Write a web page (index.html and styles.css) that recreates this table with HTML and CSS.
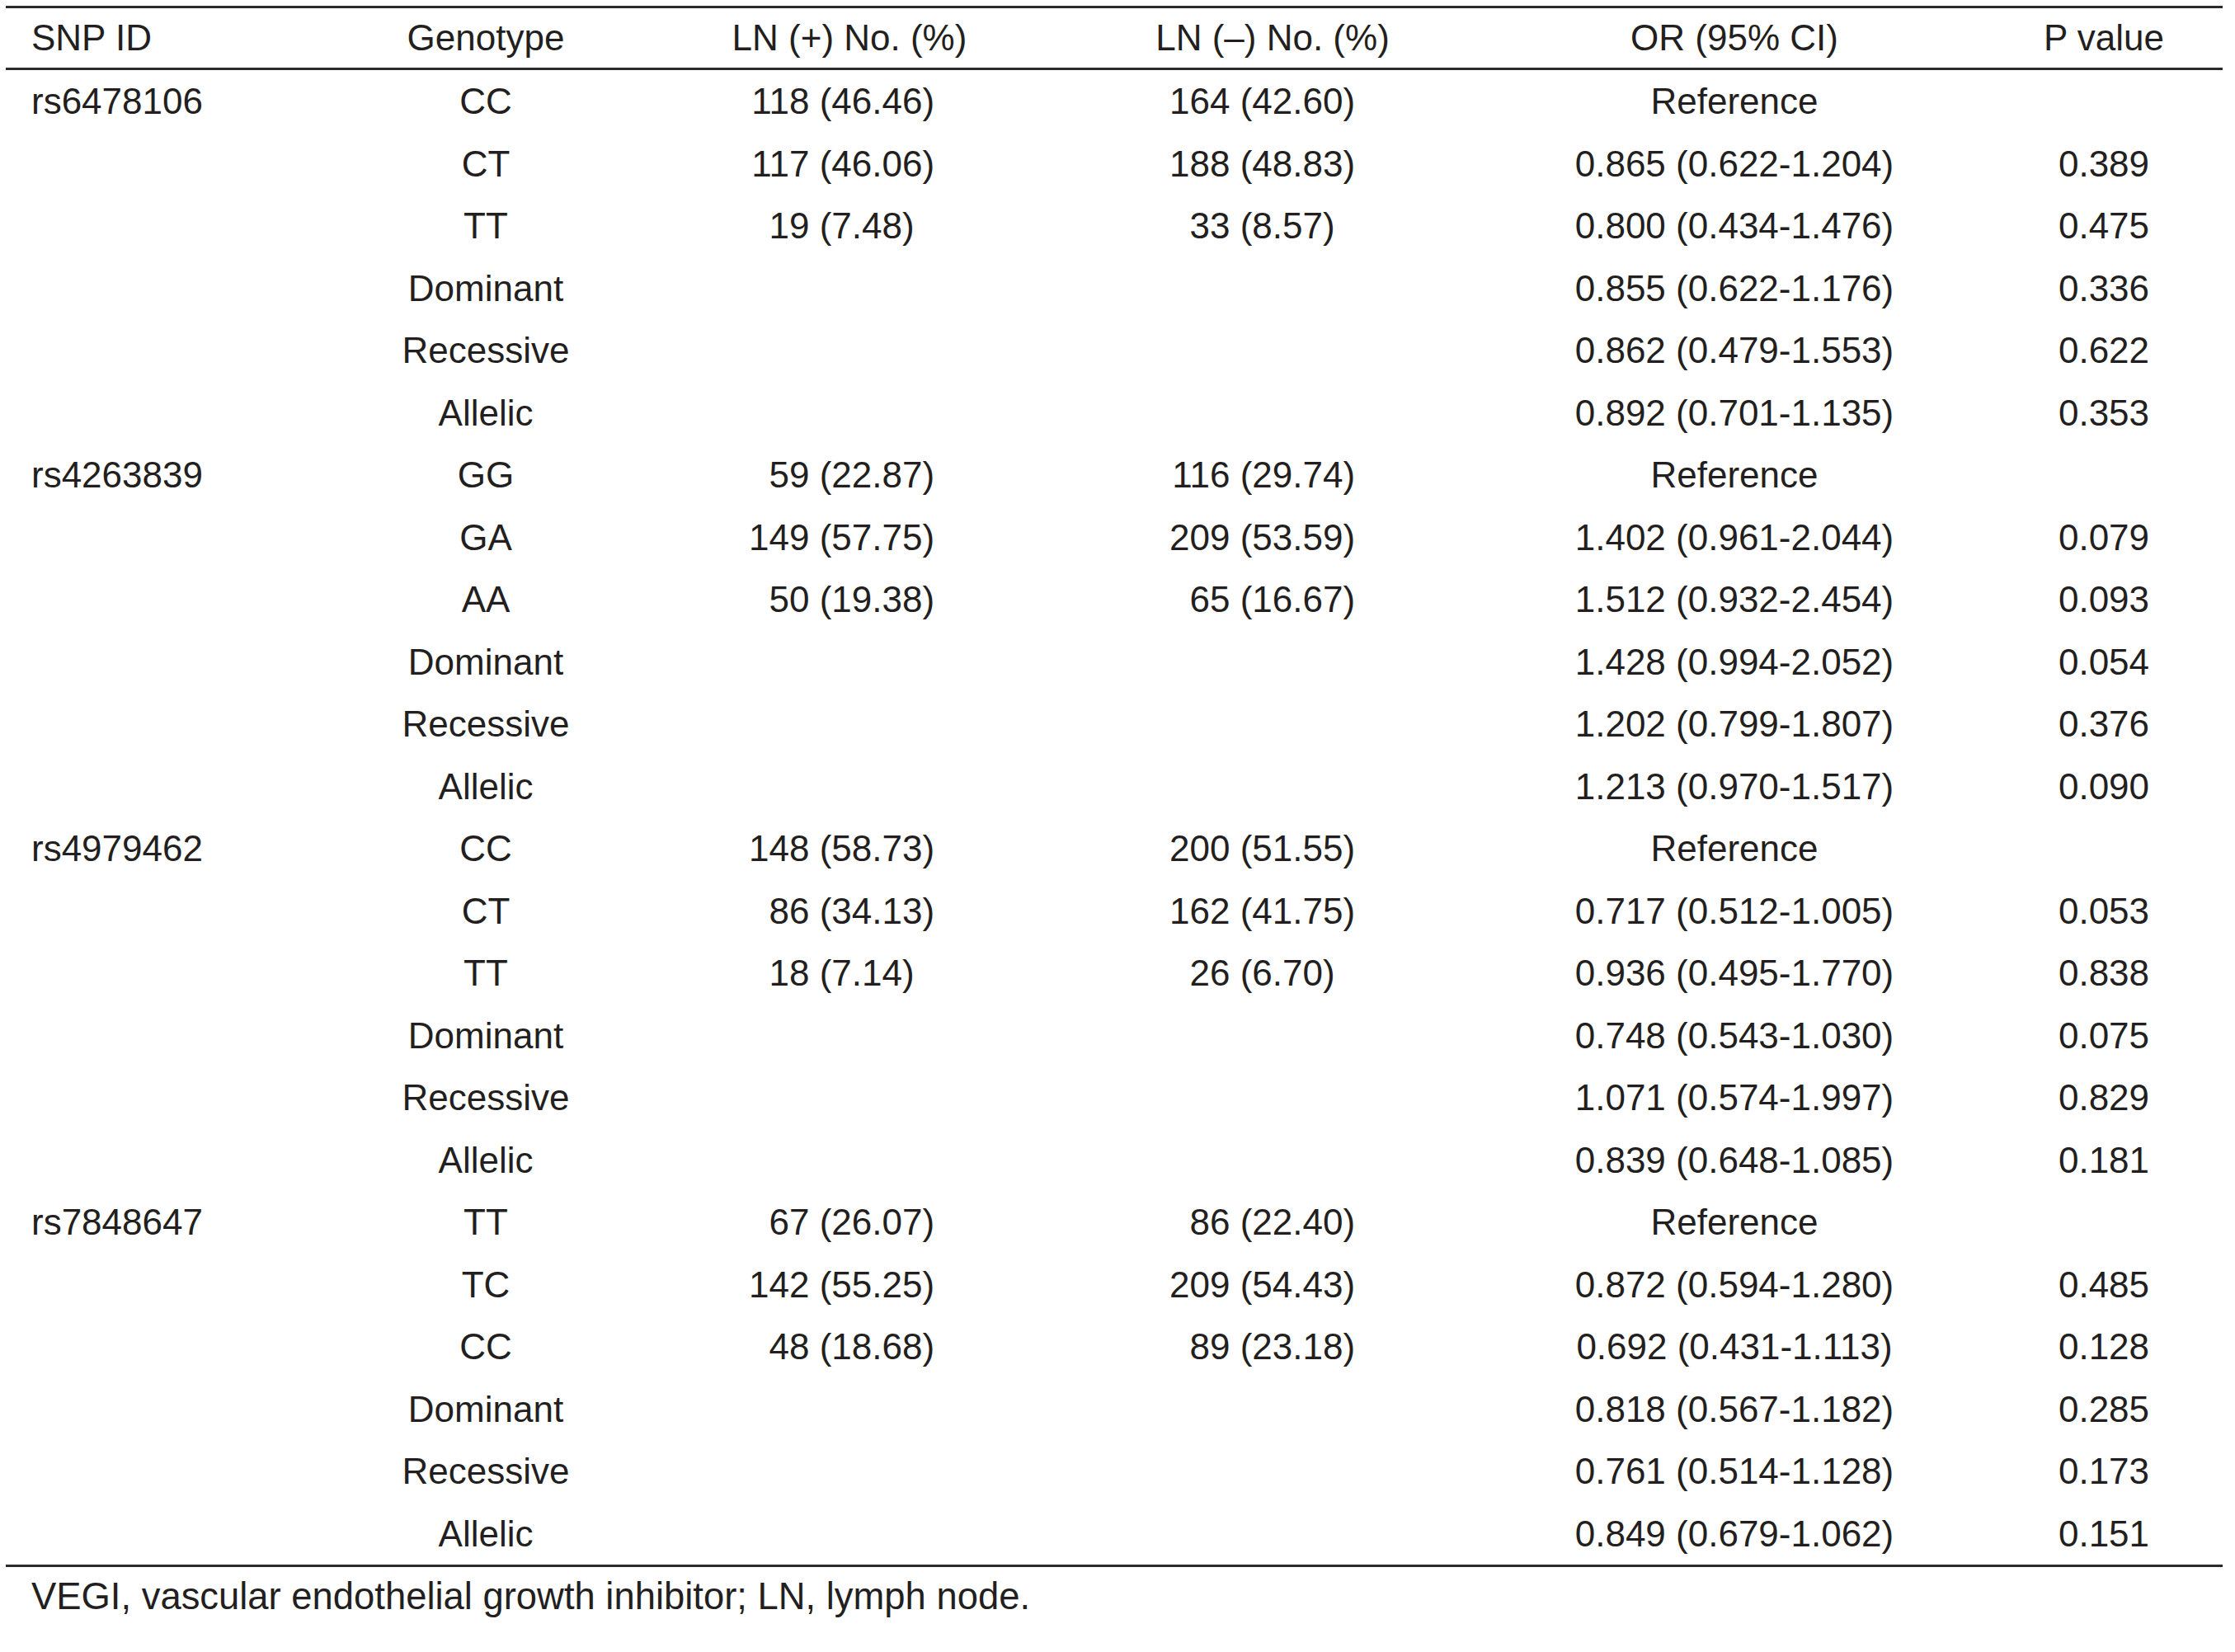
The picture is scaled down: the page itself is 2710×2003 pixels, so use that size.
FILE: index.html
```html
<!DOCTYPE html>
<html lang="en">
<head>
<meta charset="utf-8">
<title>VEGI SNP genotypes and LN status</title>
<link rel="stylesheet" href="styles.css">
</head>
<body>
<div class="page">
<table class="data">
<colgroup>
<col class="c1"><col class="c2"><col class="c3"><col class="c4"><col class="c5"><col class="c6">
</colgroup>
<thead>
<tr><th class="left">SNP ID</th><th>Genotype</th><th>LN (+) No. (%)</th><th>LN (–) No. (%)</th><th>OR (95% CI)</th><th class="last">P value</th></tr>
</thead>
<tbody>
<tr><td class="left">rs6478106</td><td>CC</td><td class="pos"><span class="n">118</span> (46.46)</td><td class="neg"><span class="n">164</span> (42.60)</td><td>Reference</td><td class="last"></td></tr>
<tr><td class="left"></td><td>CT</td><td class="pos"><span class="n">117</span> (46.06)</td><td class="neg"><span class="n">188</span> (48.83)</td><td>0.865 (0.622-1.204)</td><td class="last">0.389</td></tr>
<tr><td class="left"></td><td>TT</td><td class="pos"><span class="n">19</span> (7.48)</td><td class="neg"><span class="n">33</span> (8.57)</td><td>0.800 (0.434-1.476)</td><td class="last">0.475</td></tr>
<tr><td class="left"></td><td>Dominant</td><td></td><td></td><td>0.855 (0.622-1.176)</td><td class="last">0.336</td></tr>
<tr><td class="left"></td><td>Recessive</td><td></td><td></td><td>0.862 (0.479-1.553)</td><td class="last">0.622</td></tr>
<tr><td class="left"></td><td>Allelic</td><td></td><td></td><td>0.892 (0.701-1.135)</td><td class="last">0.353</td></tr>
<tr><td class="left">rs4263839</td><td>GG</td><td class="pos"><span class="n">59</span> (22.87)</td><td class="neg"><span class="n">116</span> (29.74)</td><td>Reference</td><td class="last"></td></tr>
<tr><td class="left"></td><td>GA</td><td class="pos"><span class="n">149</span> (57.75)</td><td class="neg"><span class="n">209</span> (53.59)</td><td>1.402 (0.961-2.044)</td><td class="last">0.079</td></tr>
<tr><td class="left"></td><td>AA</td><td class="pos"><span class="n">50</span> (19.38)</td><td class="neg"><span class="n">65</span> (16.67)</td><td>1.512 (0.932-2.454)</td><td class="last">0.093</td></tr>
<tr><td class="left"></td><td>Dominant</td><td></td><td></td><td>1.428 (0.994-2.052)</td><td class="last">0.054</td></tr>
<tr><td class="left"></td><td>Recessive</td><td></td><td></td><td>1.202 (0.799-1.807)</td><td class="last">0.376</td></tr>
<tr><td class="left"></td><td>Allelic</td><td></td><td></td><td>1.213 (0.970-1.517)</td><td class="last">0.090</td></tr>
<tr><td class="left">rs4979462</td><td>CC</td><td class="pos"><span class="n">148</span> (58.73)</td><td class="neg"><span class="n">200</span> (51.55)</td><td>Reference</td><td class="last"></td></tr>
<tr><td class="left"></td><td>CT</td><td class="pos"><span class="n">86</span> (34.13)</td><td class="neg"><span class="n">162</span> (41.75)</td><td>0.717 (0.512-1.005)</td><td class="last">0.053</td></tr>
<tr><td class="left"></td><td>TT</td><td class="pos"><span class="n">18</span> (7.14)</td><td class="neg"><span class="n">26</span> (6.70)</td><td>0.936 (0.495-1.770)</td><td class="last">0.838</td></tr>
<tr><td class="left"></td><td>Dominant</td><td></td><td></td><td>0.748 (0.543-1.030)</td><td class="last">0.075</td></tr>
<tr><td class="left"></td><td>Recessive</td><td></td><td></td><td>1.071 (0.574-1.997)</td><td class="last">0.829</td></tr>
<tr><td class="left"></td><td>Allelic</td><td></td><td></td><td>0.839 (0.648-1.085)</td><td class="last">0.181</td></tr>
<tr><td class="left">rs7848647</td><td>TT</td><td class="pos"><span class="n">67</span> (26.07)</td><td class="neg"><span class="n">86</span> (22.40)</td><td>Reference</td><td class="last"></td></tr>
<tr><td class="left"></td><td>TC</td><td class="pos"><span class="n">142</span> (55.25)</td><td class="neg"><span class="n">209</span> (54.43)</td><td>0.872 (0.594-1.280)</td><td class="last">0.485</td></tr>
<tr><td class="left"></td><td>CC</td><td class="pos"><span class="n">48</span> (18.68)</td><td class="neg"><span class="n">89</span> (23.18)</td><td>0.692 (0.431-1.113)</td><td class="last">0.128</td></tr>
<tr><td class="left"></td><td>Dominant</td><td></td><td></td><td>0.818 (0.567-1.182)</td><td class="last">0.285</td></tr>
<tr><td class="left"></td><td>Recessive</td><td></td><td></td><td>0.761 (0.514-1.128)</td><td class="last">0.173</td></tr>
<tr class="final"><td class="left"></td><td>Allelic</td><td></td><td></td><td>0.849 (0.679-1.062)</td><td class="last">0.151</td></tr>
</tbody>
</table>
<p class="note">VEGI, vascular endothelial growth inhibitor; LN, lymph node.</p>
</div>
</body>
</html>
```

FILE: styles.css
```css
html, body {
  margin: 0;
  padding: 0;
  background: #ffffff;
}

body {
  font-family: "Liberation Sans", Arial, sans-serif;
  font-size: 44px;
  color: #231f20;
}

.page {
  padding: 7px 0 0 7px;
  width: 2688px;
}

.data {
  width: 2688px;
  table-layout: fixed;
  border-collapse: separate;
  border-spacing: 0;
}

.c1 { width: 413px; }
.c2 { width: 338px; }
.c3 { width: 544px; }
.c4 { width: 482px; }
.c5 { width: 638px; }
.c6 { width: 273px; }

.data th,
.data td {
  padding: 0;
  text-align: center;
  white-space: nowrap;
  font-weight: normal;
}

.data th {
  line-height: 72px;
  border-top: 3px solid #2b2b2b;
  border-bottom: 3px solid #2b2b2b;
}

.data td {
  line-height: 75.5px;
  height: 75.5px;
}

.data .left {
  text-align: left;
  padding-left: 31px;
}

.data .last {
  padding-right: 15px;
}

.data td.pos {
  text-align: left;
  padding-left: 150px;
}

.data td.neg {
  text-align: left;
  padding-left: 116px;
}

.n {
  display: inline-block;
  width: 3ch;
  text-align: right;
}

.data tr.final td {
  border-bottom: 3px solid #2b2b2b;
}

.note {
  margin: 0;
  padding-left: 31px;
  line-height: 72px;
  font-size: 45.4px;
}
```
